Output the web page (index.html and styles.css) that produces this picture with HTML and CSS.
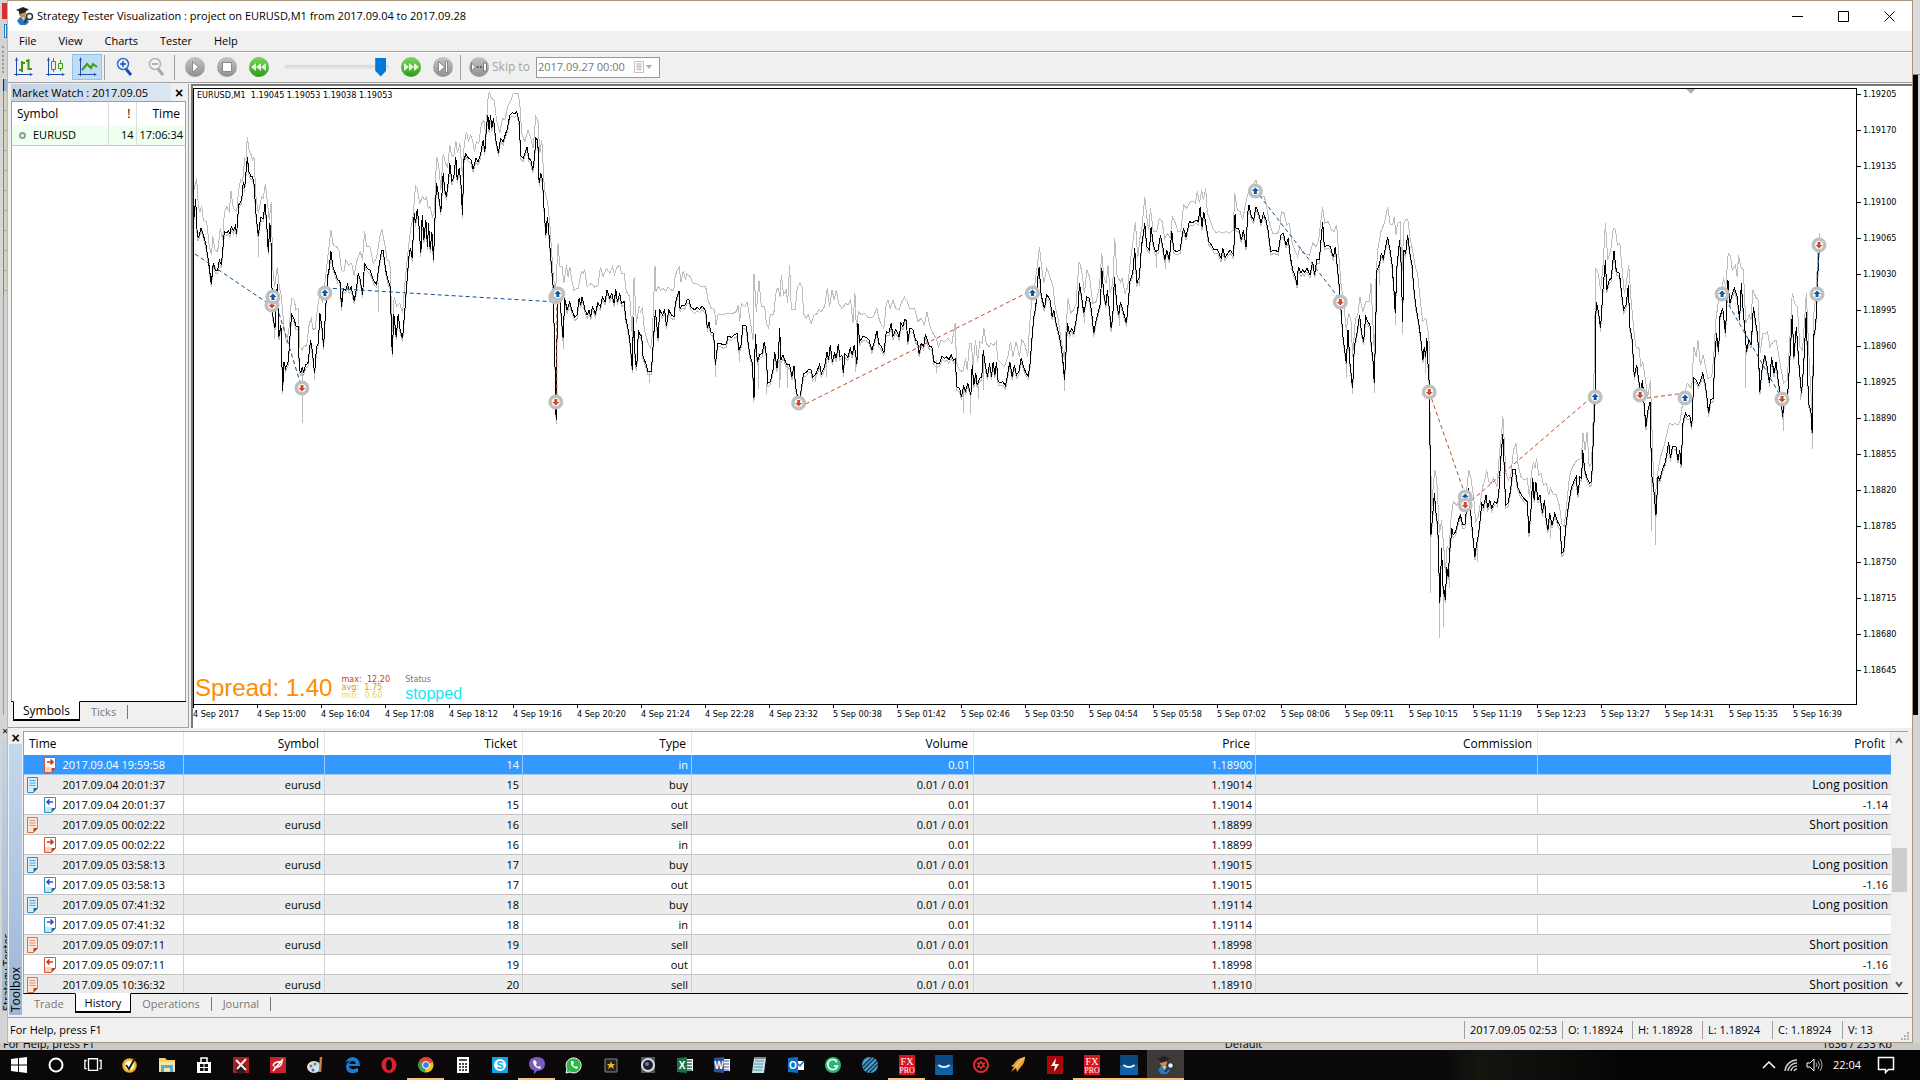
FILE: index.html
```html
<!DOCTYPE html>
<html lang="en">
<head>
<meta charset="utf-8">
<title>Strategy Tester Visualization</title>
<link rel="stylesheet" href="styles.css">
</head>
<body>
<svg class="defs" width="0" height="0" aria-hidden="true">
  <defs>
    <linearGradient id="grey" x2="0" y2="1"><stop stop-color="#c4c4c4"/><stop offset="1" stop-color="#8f8f8f"/></linearGradient>
    <linearGradient id="green" x2="0" y2="1"><stop stop-color="#7fd45c"/><stop offset="1" stop-color="#2f9a1e"/></linearGradient>
    <symbol id="buy" viewBox="0 0 16 16"><circle cx="8" cy="8" r="5.700" fill="#fff" stroke="#bfbfbf" stroke-width="3.600"/><path d="M8 4.500l3.500 3.500H9.500v3h-3V8h-2z" fill="#0b5aa5"/></symbol>
    <symbol id="sell" viewBox="0 0 16 16"><circle cx="8" cy="8" r="5.700" fill="#fff" stroke="#bfbfbf" stroke-width="3.600"/><path d="M8 11.500l3.500-3.500H9.500V5h-3v3h-2z" fill="#d0472a"/></symbol>
    <symbol id="order-blue" viewBox="0 0 12 16"><path d="M1.5.5h10v11l-4 4h-6z" fill="#d9eefb" stroke="#2b8fc0"/><path d="M3.500 3.500h6M3.500 6h6M3.500 8.500h6" stroke="#58a6cf"/><path d="M11.500 11h-4v4.500z" fill="#1b6f9c"/></symbol>
    <symbol id="order-red" viewBox="0 0 12 16"><path d="M1.5.5h10v11l-4 4h-6z" fill="#fbe3d6" stroke="#d9744f"/><path d="M3.500 3.500h6M3.500 6h6M3.500 8.500h6" stroke="#e0957a"/><path d="M11.500 11h-4v4.500z" fill="#b8401c"/></symbol>
    <symbol id="in-red" viewBox="0 0 12 16"><path d="M.5.5h11v11l-4 4h-7z" fill="#fff" stroke="#d05a38"/><path d="M1 10h6v5H1z" fill="#f8d0c0"/><path d="M3 5h6M6.500 2.500L9 5 6.500 7.500" fill="none" stroke="#c0391b" stroke-width="1.500"/><path d="M11.500 11h-4v4.500z" fill="#b8401c"/></symbol>
    <symbol id="out-red" viewBox="0 0 12 16"><path d="M.5.5h11v11l-4 4h-7z" fill="#fff" stroke="#d05a38"/><path d="M1 10h6v5H1z" fill="#f8d0c0"/><path d="M3 5h6M5.500 2.500L3 5l2.500 2.500" fill="none" stroke="#c0391b" stroke-width="1.500"/><path d="M11.500 11h-4v4.500z" fill="#b8401c"/></symbol>
    <symbol id="in-blue" viewBox="0 0 12 16"><path d="M.5.5h11v11l-4 4h-7z" fill="#fff" stroke="#2b8fc0"/><path d="M1 10h6v5H1z" fill="#c5e4f6"/><path d="M3 5h6M6.500 2.500L9 5 6.500 7.500" fill="none" stroke="#2b50b0" stroke-width="1.500"/><path d="M11.500 11h-4v4.500z" fill="#1b6f9c"/></symbol>
    <symbol id="out-blue" viewBox="0 0 12 16"><path d="M.5.5h11v11l-4 4h-7z" fill="#fff" stroke="#2b8fc0"/><path d="M1 10h6v5H1z" fill="#c5e4f6"/><path d="M3 5h6M5.500 2.500L3 5l2.500 2.500" fill="none" stroke="#2b50b0" stroke-width="1.500"/><path d="M11.500 11h-4v4.500z" fill="#1b6f9c"/></symbol>
    <symbol id="student" viewBox="0 0 18 18"><path d="M4 10l5-1 4 6-3 3H4L1 14z" fill="#2577d0"/><circle cx="6.500" cy="6.500" r="3.500" fill="#c98a55"/><path d="M0 3l7-3 6 2.500L7 6z" fill="#222"/><path d="M3 4v3l7-2V3z" fill="#222"/><path d="M5 10l3 4 1-4z" fill="#f1d45c"/><circle cx="13.500" cy="9.500" r="3" fill="#eaf4ff" stroke="#333" stroke-width="1.500"/><path d="M11 12l-3 4" stroke="#333" stroke-width="2"/></symbol>
    <symbol id="fxpro" viewBox="0 0 16 20"><path fill="#dc1420" d="M0 0h16v20H0z"/><text x="8" y="10" class="logo-serif">FX</text><text x="8" y="18" class="logo-serif small">PRO</text></symbol>
    <symbol id="swoosh" viewBox="0 0 16 18"><path fill="#0b4a80" d="M0 0h16v18H0z"/><path fill="#0e62a3" d="M0 9h16v9H0z"/><path d="M3 9q5 4 10 0" fill="none" stroke="#e8f4ff" stroke-width="1.500"/></symbol>
  </defs>
</svg>

<div class="desktop">
  <aside class="behind-left" aria-hidden="true">
    <span class="bl-red"></span><span class="bl-blue"></span><span class="bl-grip"></span><span class="bl-panel"></span><span class="bl-rows"></span><span class="bl-plain"></span><span class="bl-close">×</span><span class="bl-blueband">Strategy Tester</span>
  </aside>

  <main class="window">
    <header class="titlebar">
      <svg class="app-icon" width="18" height="18"><use href="#student"/></svg>
      <h1>Strategy Tester Visualization : project on EURUSD,M1 from 2017.09.04 to 2017.09.28</h1>
      <button class="winbtn" aria-label="Minimize"><svg width="11" height="11"><path d="M0 5.500h11" stroke="#000"/></svg></button>
      <button class="winbtn" aria-label="Maximize"><svg width="11" height="11"><path d="M.5.5h10v10H.5z" fill="none" stroke="#000"/></svg></button>
      <button class="winbtn" aria-label="Close"><svg width="11" height="11"><path d="M.5.5l10 10M10.500.5l-10 10" stroke="#000"/></svg></button>
    </header>

    <nav class="menu"><button>File</button><button>View</button><button>Charts</button><button>Tester</button><button>Help</button></nav>

    <div class="toolbar">
      <button class="tool" aria-label="Bar chart"><svg width="22" height="22"><path d="M4.500 3v17M2 18.500h18" stroke="#1d4fb0"/><path d="M3 4.500L4.500 1 6 4.500zM18 17l3 1.500-3 1.500z" fill="#1d4fb0"/><path d="M10 5v11M7 14h3M10 7h3M16.500 3v11M14 5h3M17 13h3" stroke="#3c9a17" stroke-width="2"/></svg></button>
      <button class="tool" aria-label="Candlesticks"><svg width="22" height="22"><path d="M4.500 3v17M2 18.500h18" stroke="#1d4fb0"/><path d="M3 4.500L4.500 1 6 4.500zM18 17l3 1.500-3 1.500z" fill="#1d4fb0"/><path d="M9.500 2v3m0 9v2M7.500 5.500h4v8h-4zM16.500 4v3m0 6v2M14.500 7.500h4v5h-4z" fill="none" stroke="#3c9a17"/></svg></button>
      <button class="tool active" aria-label="Line chart"><svg width="22" height="22"><path d="M4.500 3v17M2 18.500h18" stroke="#1d4fb0"/><path d="M3 4.500L4.500 1 6 4.500zM18 17l3 1.500-3 1.500z" fill="#1d4fb0"/><path d="M6 14l5-6 4 4 2-4 4 3" fill="none" stroke="#3c9a17" stroke-width="2"/></svg></button>
      <span class="sep"></span>
      <button class="tool" aria-label="Zoom in"><svg width="22" height="22"><path d="M12 13l5 6" stroke="#1d4fb0" stroke-width="3"/><circle cx="9" cy="8" r="5.500" fill="#e6f2fd" stroke="#2f6fc4" stroke-width="1.500"/><path d="M6 8h6M9 5v6" stroke="#1d4fb0" stroke-width="1.500"/></svg></button>
      <button class="tool" aria-label="Zoom out"><svg width="22" height="22"><path d="M12 13l5 6" stroke="#a8a8a8" stroke-width="3"/><circle cx="9" cy="8" r="5.500" fill="#f4f4f4" stroke="#b0b0b0" stroke-width="1.500"/><path d="M6 8h6" stroke="#999" stroke-width="1.500"/></svg></button>
      <span class="sep"></span>
      <button class="tool" aria-label="Play"><svg width="22" height="22"><circle cx="11" cy="11" r="10" fill="url(#grey)"/><path d="M8.500 5.500l6 5.500-6 5.500z" fill="#fff" stroke="#888"/></svg></button>
      <button class="tool" aria-label="Stop"><svg width="22" height="22"><circle cx="11" cy="11" r="10" fill="url(#grey)"/><path d="M6.500 6.500h9v9h-9z" fill="#fff" stroke="#888"/></svg></button>
      <button class="tool" aria-label="Slower"><svg width="22" height="22"><circle cx="11" cy="11" r="10" fill="url(#green)"/><path d="M8 7v8l-5-4zM13 7v8l-5-4zM18 7v8l-5-4z" fill="#e4f7da"/></svg></button>
      <input class="speed" type="range" min="0" max="100" value="97" aria-label="Speed">
      <button class="tool" aria-label="Faster"><svg width="22" height="22"><circle cx="11" cy="11" r="10" fill="url(#green)"/><path d="M4 7v8l5-4zM9 7v8l5-4zM14 7v8l5-4z" fill="#e4f7da"/></svg></button>
      <button class="tool" aria-label="Step"><svg width="22" height="22"><circle cx="11" cy="11" r="10" fill="url(#grey)"/><path d="M6.500 5.500l6 5.500-6 5.500zM13.500 5.500h2v11h-2z" fill="#fff" stroke="#888"/></svg></button>
      <span class="sep"></span>
      <button class="skip"><svg width="22" height="22"><circle cx="11" cy="11" r="10" fill="url(#grey)"/><path d="M3.500 7l4 4-4 4zM15.500 7h3v8h-3z" fill="#fff" stroke="#777"/><path d="M9 11h1.500M12 11h1.500" stroke="#555" stroke-width="2"/></svg>Skip to</button>
      <div class="datebox"><input type="text" value="2017.09.27 00:00" aria-label="Skip to date" disabled><svg width="26" height="14"><path d="M1.500 1.500h9v11h-9zM3 4h6M3 6.500h6M3 9h6M5 3v8M7 3v8" fill="none" stroke="#c2c2c2"/><path d="M13 5h6l-3 4z" fill="#aaa"/></svg></div>
    </div>

    <div class="workspace">
      <section class="watch">
        <header><h2>Market Watch : 2017.09.05</h2><button aria-label="Close Market Watch">×</button></header>
        <div class="watch-body">
          <table>
            <colgroup><col class="w-sym"><col class="w-spread"><col></colgroup>
            <thead><tr><th>Symbol</th><th>!</th><th>Time</th></tr></thead>
            <tbody><tr><td><i class="dot"></i>EURUSD</td><td>14</td><td>17:06:34</td></tr></tbody>
          </table>
        </div>
        <nav class="tabs watch-tabs"><button class="on">Symbols</button><button>Ticks</button></nav>
      </section>

      <section class="chart">
        <div class="plot">
          <svg class="lines" viewBox="194 89 1663 615" preserveAspectRatio="none">
            <path d="M1687 89h9l-4 5z" fill="#b0b0b0"/>
            <g class="range" transform="translate(180 80) scale(.33333)">
              <polyline points="42,330 50,295 55,380 60,395 65,378 70,420 80,425 88,500 95,525 98,468 105,510 113,515 121,445 128,480 133,400 140,380 148,395 153,333 160,385 170,395 176,330 182,300 188,305 194,235 198,240 202,172 208,215 214,225 218,240 222,232 228,350 235,400 245,350 250,355 256,312 262,365 268,420 274,365 278,560 284,620 292,560 298,620 303,640 312,740 320,790 328,740 335,655 343,660 348,690 355,685 360,800 367,810 373,795 380,800 388,730 394,715 400,750 406,745 412,690 420,640 428,670 436,600 445,520 453,450 460,495 470,500 478,515 485,570 492,575 498,540 506,555 515,550 523,588 530,545 541,515 548,540 554,452 560,500 570,500 580,550 590,535 600,470 606,447 614,490 622,540 630,545 637,755 643,650 650,680 660,670 668,700 676,600 684,520 692,450 700,405 707,318 712,325 720,370 728,350 735,360 740,350 745,385 750,380 758,410 764,395 770,230 776,250 783,330 790,222 797,250 803,265 810,195 815,225 822,230 828,183 833,220 840,190 848,290 853,195 860,155 866,185 872,165 878,180 884,215 890,185 897,190 905,130 912,120 918,165 924,60 928,35 935,55 943,60 950,120 960,160 968,115 975,120 985,75 992,65 1000,42 1015,42 1020,70 1026,160 1035,185 1045,150 1053,175 1060,205 1068,110 1075,125 1080,220 1086,180 1094,330 1104,370 1110,430 1120,580 1127,640 1135,490 1140,560 1147,560 1152,610 1160,555 1165,590 1170,560 1175,595 1182,630 1195,625 1205,575 1210,580 1215,570 1222,620 1235,610 1245,622 1255,615 1262,560 1270,590 1280,565 1290,580 1298,560 1304,585 1312,562 1320,555 1325,580 1333,580 1340,635 1350,650 1358,770 1363,590 1370,730 1378,680 1380,682"/>
              <path d="M367 870V1030M235 470V532M404 870V900M595 610V695M1131 1000V1033M283 740V778M1150 770V808"/>
              <use href="#close-a" y="10"/>
            </g>
            <g class="range" transform="translate(640 200) scale(.33333)">
              <polyline points="0,340 8,325 14,390 25,430 33,445 38,400 46,198 49,275 56,260 63,270 70,265 78,275 85,262 95,270 102,272 107,225 118,200 124,245 131,212 137,240 141,222 152,230 160,250 172,252 185,260 198,260 205,300 215,325 225,330 229,375 235,345 250,345 262,340 275,342 290,335 296,315 300,365 305,310 315,320 322,305 330,350 340,420 343,222 350,335 358,242 365,320 375,320 380,370 387,385 392,345 402,345 410,270 416,265 421,290 425,225 432,285 440,270 444,310 450,195 455,328 467,328 473,260 482,250 489,265 491,340 500,355 506,345 515,370 523,345 530,345 537,330 545,335 555,320 563,265 570,320 577,270 584,300 590,270 597,310 607,325 618,310 625,315 633,300 640,370 646,280 650,380 657,335 665,345 675,340 685,352 700,352 712,325 718,355 725,375 733,385 740,310 745,300 752,325 760,300 768,325 778,330 787,305 795,292 803,305 810,325 825,325 835,365 845,355 855,375 862,335 870,375 880,400 890,415 897,440 905,420 915,425 925,415 937,430 947,370 951,490 960,510 970,515 978,475 983,510 990,430 996,430 1000,500 1008,420 1014,485 1021,425 1028,430 1033,385 1040,430 1048,440 1055,430 1062,435 1070,425 1075,480 1085,490 1095,500 1105,470 1113,425 1120,470 1130,425 1140,470 1147,420 1155,430 1165,470 1170,380 1177,300 1185,260 1193,200 1200,140 1205,190 1213,250 1222,205 1228,220 1240,255 1247,320 1255,350 1265,420 1275,480 1282,350 1286,295 1293,340 1302,330 1310,310 1318,190 1320,188"/>
              <path d="M28 515V548M227 490V532M298 440V485M358 460V568M382 550V582M420 480V565M443 490V565M424 480V540M611 510V520M647 460V515M892 480V518M973 575V638M994 585V641M1018 540V597M1033 460V570M1275 520V572M528 520V545M562 460V530"/>
              <use href="#close-b" y="10"/>
            </g>
            <g class="range" transform="translate(1080 170) scale(.33333)">
              <polyline points="0,275 8,310 15,370 22,300 30,320 40,400 50,395 60,350 67,250 73,320 80,340 86,285 92,370 100,340 106,205 113,320 123,335 128,325 137,370 145,350 153,270 160,220 168,155 175,265 182,200 188,170 196,80 203,150 208,180 213,115 222,185 232,185 240,145 248,155 256,205 265,190 272,205 279,140 288,160 296,185 304,185 313,105 322,115 332,95 342,95 348,100 354,62 360,100 367,60 372,90 379,55 384,130 392,150 400,175 410,188 420,185 430,190 440,185 450,190 462,180 466,70 474,120 482,125 490,150 497,110 503,80 511,60 530,30 540,80 555,80 562,110 570,160 580,190 595,190 601,175 606,125 614,130 622,165 630,160 638,215 648,245 655,260 662,230 672,250 690,255 700,220 710,230 718,210 725,150 730,110 736,160 747,155 756,180 764,185 772,165 778,250 785,340 793,400 801,480 808,430 815,450 820,560 828,450 836,430 842,380 850,425 860,395 870,395 875,340 880,440 886,560 890,330 895,240 905,185 915,160 925,110 933,165 940,165 945,140 950,195 955,160 963,155 968,310 974,160 980,148 986,150 993,210 1000,240 1008,290 1015,310 1022,380 1030,455 1040,445 1046,480 1050,520 1052,640"/>
              <path d="M230 245V293M257 270V297M801 580V625M819 650V673M886 640V670M948 430V465M969 455V493M1039 560V612M16 420V460M121 430V468M180 330V348M900 285V345"/>
              <use href="#close-c" y="10"/>
            </g>
            <g class="range" transform="translate(1380 180) scale(.34433 .33333)">
              <polyline points="146,600 152,1000 156,930 161,870 167,900 175,1060 181,1020 188,1110 192,1180 197,1100 203,1110 208,1020 215,965 225,975 235,960 245,970 253,940 260,870 267,900 275,960 280,1025 288,1010 295,960 300,920 306,905 312,870 318,905 325,910 332,895 342,920 350,810 355,770 359,707 363,780 368,880 375,900 382,890 390,810 397,790 404,860 412,890 420,900 430,895 436,950 442,880 448,850 453,865 457,835 463,885 470,880 477,915 485,910 492,945 498,925 506,945 515,945 524,980 530,1030 537,1040 544,980 552,895 558,870 565,855 575,840 587,835 592,760 598,810 604,757 610,860 617,850 622,700 627,400 629,265 636,280 643,330 650,260 657,130 664,240 672,215 680,145 686,148 692,195 699,190 706,270 712,340 718,310 725,255 731,350 738,430 745,500 755,505 760,560 766,545 772,590 780,650 788,600 794,800 800,990 806,900 812,860 820,820 828,795 836,760 843,730 852,735 860,730 868,735 875,720 880,680 887,640 895,610 903,620 908,625 914,500 921,530 926,480 933,555 941,525 948,560 955,595 966,590 972,530 978,420 986,360 994,340 1000,295 1007,320 1014,220 1020,225 1026,270 1035,255 1040,290 1044,225 1050,260 1058,270 1065,430 1075,405 1080,420 1086,330 1093,350 1101,360 1107,520 1114,460 1122,460 1128,455 1135,500 1145,485 1153,480 1160,520 1168,570 1175,610 1185,600 1192,500 1200,340 1207,370 1215,380 1222,500 1230,510 1241,340 1250,560 1258,700 1263,400 1270,330 1275,200 1280,160"/>
              <path d="M150 1060V1240M175 1260V1375M187 1240V1340M203 1170V1225M285 1080V1147M435 1060V1072M498 1000V1075M791 880V1052M802 1000V1095M1065 510V625M1174 700V752M1258 750V806M1225 640V660"/>
              <use href="#close-d" y="10"/>
            </g>
            <g class="close" transform="translate(180 80) scale(.33333)"><polyline id="close-a" points="42,410 47,358 52,470 56,472 63,443 70,465 78,495 85,540 94,612 100,548 106,570 113,572 118,540 124,555 130,490 133,455 140,458 146,452 150,462 154,440 160,452 166,438 170,462 176,375 185,360 190,305 194,325 202,232 207,275 213,290 218,290 222,310 228,400 235,468 242,412 250,415 255,372 260,425 265,515 270,430 275,520 277,700 285,745 292,612 297,770 303,735 308,932 312,845 317,865 325,845 330,770 335,703 342,715 348,738 355,740 358,868 363,878 367,862 371,878 377,855 384,850 392,780 398,820 404,880 410,800 415,790 420,700 426,740 431,800 437,690 443,590 448,565 453,513 459,560 468,585 474,600 480,603 485,682 490,625 497,630 503,612 508,630 514,622 523,662 530,625 535,580 541,598 548,645 554,548 562,565 570,570 577,590 583,605 590,612 597,560 605,512 610,512 617,568 624,600 631,620 637,822 642,703 649,770 655,703 661,750 668,775 675,690 680,620 688,520 692,503 697,535 703,400 707,430 712,388 717,430 723,520 727,405 732,480 738,420 743,500 746,430 751,508 756,455 761,540 766,400 770,310 776,345 783,395 790,280 795,330 800,350 806,300 810,250 816,305 822,290 828,232 832,300 838,265 843,305 848,405 852,240 858,222 866,235 873,238 880,268 888,235 895,245 902,225 910,180 915,215 920,140 924,105 928,150 932,105 936,145 941,115 948,180 956,220 962,175 970,185 976,165 983,145 990,105 997,98 1005,102 1011,95 1018,125 1023,228 1030,235 1036,218 1042,200 1047,235 1053,240 1059,270 1064,235 1068,175 1074,180 1078,310 1083,280 1088,300 1093,390 1098,465 1103,410 1108,470 1115,560 1120,620 1124,780 1129,1020 1133,660 1140,640 1145,720 1150,775 1155,655 1162,690 1170,665 1176,690 1185,712 1192,705 1198,655 1203,675 1207,650 1216,690 1222,705 1228,690 1233,710 1238,680 1247,700 1254,670 1262,680 1268,650 1276,665 1282,630 1290,655 1296,640 1303,670 1308,628 1313,665 1320,640 1325,670 1333,665 1338,715 1344,740 1350,780 1358,870 1361,710 1367,850 1371,862 1376,750 1380,765"/></g>
            <g class="close" transform="translate(640 200) scale(.33333)"><polyline id="close-b" points="0,400 6,410 10,470 18,490 25,515 35,515 40,440 47,330 55,415 60,330 68,345 75,330 80,378 87,330 95,345 103,350 107,310 112,290 118,272 121,325 128,315 135,318 142,300 148,300 153,320 165,330 172,322 180,328 187,318 198,332 203,385 208,365 213,395 222,400 227,495 234,430 242,430 250,435 260,432 265,408 275,412 283,405 292,400 298,450 304,435 310,375 320,378 326,435 332,470 338,490 343,595 347,402 353,485 360,465 368,460 374,425 380,465 384,550 392,545 400,510 405,455 412,505 416,470 420,385 424,480 430,465 440,492 450,495 457,530 463,497 468,560 473,585 480,600 486,560 492,520 500,518 506,508 514,508 519,532 530,520 540,492 545,522 555,500 562,455 567,480 572,435 578,485 585,460 590,475 596,432 601,470 607,465 611,520 616,462 625,472 632,445 638,465 644,435 648,460 652,492 655,370 660,425 670,410 680,412 688,420 697,450 703,430 712,392 718,430 725,440 733,458 740,395 748,398 755,370 760,410 768,390 775,400 779,412 784,370 790,380 795,358 800,362 805,425 811,385 820,388 828,420 834,425 839,462 845,430 852,440 858,402 863,420 870,440 877,440 883,485 893,492 900,490 908,468 915,475 922,470 928,480 935,465 942,480 948,475 951,560 960,565 966,590 972,558 978,572 985,550 994,585 998,495 1003,555 1009,520 1013,555 1020,535 1027,530 1031,450 1038,500 1044,530 1050,490 1056,530 1061,485 1066,525 1071,485 1076,545 1085,548 1090,545 1098,558 1105,520 1111,485 1118,530 1125,495 1131,525 1138,515 1145,475 1152,500 1160,520 1166,528 1172,490 1177,420 1183,350 1189,320 1194,240 1199,202 1205,285 1215,325 1221,285 1227,290 1232,300 1238,350 1243,330 1250,370 1260,410 1266,445 1272,500 1275,540 1280,450 1284,370 1290,400 1297,385 1303,400 1310,360 1316,320 1320,250"/></g>
            <g class="close" transform="translate(1080 170) scale(.33333)"><polyline id="close-c" points="0,340 5,370 13,430 22,380 30,385 37,430 43,490 50,450 58,420 63,400 67,295 73,370 79,405 84,360 90,420 95,475 100,440 105,322 112,400 118,435 123,395 130,420 141,460 147,390 152,330 160,310 166,235 172,340 180,320 186,230 196,160 202,230 210,240 215,170 222,225 228,245 236,240 243,195 250,230 256,270 262,240 270,270 277,182 283,240 292,245 302,240 312,175 320,200 330,155 340,158 350,150 357,155 362,112 368,170 373,125 380,165 388,215 396,225 405,240 415,240 425,265 430,235 437,262 445,250 452,240 463,255 467,132 470,175 478,175 486,210 492,180 500,230 505,130 509,105 516,140 523,150 530,110 538,130 545,158 552,130 560,150 566,180 574,245 583,240 597,245 604,195 612,190 620,225 627,205 633,260 640,300 648,320 653,345 657,290 665,310 670,300 675,308 683,295 692,315 700,275 706,315 712,270 720,270 725,210 730,155 735,230 745,225 753,230 762,262 768,230 774,290 779,340 785,420 791,500 801,580 806,480 812,580 820,655 825,530 833,490 841,435 847,490 853,515 859,440 866,455 872,465 876,530 881,570 885,640 889,480 893,300 900,285 906,250 912,265 918,235 925,200 932,240 938,280 944,360 948,430 953,290 961,210 966,290 970,455 974,240 979,250 985,195 992,250 999,290 1003,350 1010,410 1017,450 1024,500 1031,570 1035,530 1039,560 1043,505 1047,600 1052,665"/></g>
            <g class="close" transform="translate(1380 180) scale(.34433 .33333)"><polyline id="close-d" points="146,634 148,860 150,1065 155,1010 160,940 165,1000 170,1040 172,1120 176,1268 181,1105 186,1240 189,1235 192,1260 196,1160 200,1190 205,1110 211,1045 215,1065 222,1055 230,1020 236,1005 242,1035 249,1035 254,980 260,925 265,990 271,1060 278,1130 282,1095 288,1065 293,1020 298,970 303,980 310,945 315,985 321,960 327,985 335,965 342,970 347,945 352,850 359,762 363,860 367,975 374,970 381,935 388,870 395,870 402,920 410,940 420,955 430,965 435,1060 441,985 446,895 450,960 455,905 461,960 467,945 474,1000 480,960 485,1020 490,1050 495,1000 502,1035 510,1000 518,1025 526,1040 530,1120 536,1115 542,1040 548,990 553,955 558,925 565,905 572,890 577,945 583,890 588,895 591,810 597,870 604,895 612,910 617,905 621,800 625,700 628,650 630,365 637,395 643,445 650,330 657,240 661,330 668,300 674,295 682,212 689,275 698,280 703,330 710,390 717,375 724,315 728,440 735,480 741,590 748,555 754,600 759,640 765,600 770,680 775,740 781,690 787,665 791,880 797,920 804,1005 810,890 815,900 822,870 830,850 836,820 841,785 846,835 852,800 862,800 868,840 873,810 877,855 883,720 890,700 895,710 902,705 908,740 914,595 921,600 928,615 934,600 940,580 947,610 952,650 957,700 963,660 970,655 975,540 980,460 986,515 990,410 998,385 1006,460 1013,300 1019,370 1025,345 1032,325 1040,350 1047,420 1052,310 1058,400 1062,440 1067,515 1074,480 1081,495 1087,380 1094,430 1100,470 1106,635 1112,570 1120,525 1127,560 1134,610 1140,530 1147,580 1153,545 1160,610 1167,650 1172,710 1178,660 1187,640 1193,540 1200,405 1205,530 1212,440 1220,560 1227,640 1233,560 1241,395 1247,670 1254,690 1258,760 1262,470 1268,440 1273,340 1275,270 1279,200"/></g>
            <path class="deal blue" d="M195 254L272 306M275 300L301 385M326 288L557 302M1256 190L1341 300M1723 293L1782 397M1818 292L1820 248"/>
            <path class="deal red" d="M557 300V398M800 407L1033 290M1430 392L1466 495M1467 505L1595 395M1641 399L1686 393"/>
            <use href="#sell" x="264" y="297" width="16" height="16"/><use href="#buy" x="265" y="289" width="16" height="16"/>
            <use href="#sell" x="294" y="380" width="16" height="16"/><use href="#buy" x="317" y="285" width="16" height="16"/>
            <use href="#buy" x="548" y="289" width="16" height="16"/><use href="#buy" x="550" y="286" width="16" height="16"/>
            <use href="#sell" x="548" y="394" width="16" height="16"/><use href="#sell" x="791" y="395" width="16" height="16"/>
            <use href="#buy" x="1025" y="285" width="16" height="16"/><use href="#buy" x="1248" y="183" width="16" height="16"/>
            <use href="#sell" x="1333" y="294" width="16" height="16"/><use href="#sell" x="1422" y="384" width="16" height="16"/>
            <use href="#buy" x="1458" y="489" width="16" height="16"/><use href="#sell" x="1458" y="497" width="16" height="16"/>
            <use href="#buy" x="1588" y="389" width="16" height="16"/><use href="#sell" x="1633" y="387" width="16" height="16"/>
            <use href="#buy" x="1678" y="390" width="16" height="16"/><use href="#buy" x="1715" y="286" width="16" height="16"/>
            <use href="#sell" x="1775" y="391" width="16" height="16"/><use href="#buy" x="1810" y="286" width="16" height="16"/>
            <use href="#sell" x="1812" y="237" width="16" height="16"/>
          </svg>
          <div class="overlay">
            <p class="quote">EURUSD,M1&nbsp; 1.19045 1.19053 1.19038 1.19053</p>
            <div class="spread">
              <strong>Spread: 1.40</strong>
              <div class="stats"><span class="max">max:&nbsp; 12.20</span><span class="avg">avg:&nbsp; 1.75</span><span class="min">min:&nbsp; 0.60</span></div>
              <div class="status"><span>Status</span><b>stopped</b></div>
            </div>
          </div>
        </div>
        <div class="prices"><span>1.19205</span><span>1.19170</span><span>1.19135</span><span>1.19100</span><span>1.19065</span><span>1.19030</span><span>1.18995</span><span>1.18960</span><span>1.18925</span><span>1.18890</span><span>1.18855</span><span>1.18820</span><span>1.18785</span><span>1.18750</span><span>1.18715</span><span>1.18680</span><span>1.18645</span></div>
        <div class="times"><span>4 Sep 2017</span><span>4 Sep 15:00</span><span>4 Sep 16:04</span><span>4 Sep 17:08</span><span>4 Sep 18:12</span><span>4 Sep 19:16</span><span>4 Sep 20:20</span><span>4 Sep 21:24</span><span>4 Sep 22:28</span><span>4 Sep 23:32</span><span>5 Sep 00:38</span><span>5 Sep 01:42</span><span>5 Sep 02:46</span><span>5 Sep 03:50</span><span>5 Sep 04:54</span><span>5 Sep 05:58</span><span>5 Sep 07:02</span><span>5 Sep 08:06</span><span>5 Sep 09:11</span><span>5 Sep 10:15</span><span>5 Sep 11:19</span><span>5 Sep 12:23</span><span>5 Sep 13:27</span><span>5 Sep 14:31</span><span>5 Sep 15:35</span><span>5 Sep 16:39</span></div>
      </section>
    </div>

    <section class="toolbox">
      <div class="side"><button aria-label="Close Toolbox">×</button><span>Toolbox</span></div>
      <div class="toolbox-main">
        <div class="history">
          <table>
            <colgroup><col class="c1"><col class="c2"><col class="c3"><col class="c4"><col class="c5"><col class="c5"><col class="c5"><col></colgroup>
            <thead><tr><th>Time</th><th>Symbol</th><th>Ticket</th><th>Type</th><th>Volume</th><th>Price</th><th>Commission</th><th>Profit</th></tr></thead>
            <tbody>
              <tr class="sel"><td><svg class="deal-ico"><use href="#in-red"/></svg>2017.09.04 19:59:58</td><td></td><td>14</td><td>in</td><td>0.01</td><td>1.18900</td><td></td><td></td></tr>
              <tr class="order"><td><svg class="order-ico"><use href="#order-blue"/></svg>2017.09.04 20:01:37</td><td>eurusd</td><td>15</td><td>buy</td><td>0.01 / 0.01</td><td>1.19014</td><td colspan="2">Long position</td></tr>
              <tr><td><svg class="deal-ico"><use href="#out-blue"/></svg>2017.09.04 20:01:37</td><td></td><td>15</td><td>out</td><td>0.01</td><td>1.19014</td><td></td><td>-1.14</td></tr>
              <tr class="order"><td><svg class="order-ico"><use href="#order-red"/></svg>2017.09.05 00:02:22</td><td>eurusd</td><td>16</td><td>sell</td><td>0.01 / 0.01</td><td>1.18899</td><td colspan="2">Short position</td></tr>
              <tr><td><svg class="deal-ico"><use href="#in-red"/></svg>2017.09.05 00:02:22</td><td></td><td>16</td><td>in</td><td>0.01</td><td>1.18899</td><td></td><td></td></tr>
              <tr class="order"><td><svg class="order-ico"><use href="#order-blue"/></svg>2017.09.05 03:58:13</td><td>eurusd</td><td>17</td><td>buy</td><td>0.01 / 0.01</td><td>1.19015</td><td colspan="2">Long position</td></tr>
              <tr><td><svg class="deal-ico"><use href="#out-blue"/></svg>2017.09.05 03:58:13</td><td></td><td>17</td><td>out</td><td>0.01</td><td>1.19015</td><td></td><td>-1.16</td></tr>
              <tr class="order"><td><svg class="order-ico"><use href="#order-blue"/></svg>2017.09.05 07:41:32</td><td>eurusd</td><td>18</td><td>buy</td><td>0.01 / 0.01</td><td>1.19114</td><td colspan="2">Long position</td></tr>
              <tr><td><svg class="deal-ico"><use href="#in-blue"/></svg>2017.09.05 07:41:32</td><td></td><td>18</td><td>in</td><td>0.01</td><td>1.19114</td><td></td><td></td></tr>
              <tr class="order"><td><svg class="order-ico"><use href="#order-red"/></svg>2017.09.05 09:07:11</td><td>eurusd</td><td>19</td><td>sell</td><td>0.01 / 0.01</td><td>1.18998</td><td colspan="2">Short position</td></tr>
              <tr><td><svg class="deal-ico"><use href="#out-red"/></svg>2017.09.05 09:07:11</td><td></td><td>19</td><td>out</td><td>0.01</td><td>1.18998</td><td></td><td>-1.16</td></tr>
              <tr class="order"><td><svg class="order-ico"><use href="#order-red"/></svg>2017.09.05 10:36:32</td><td>eurusd</td><td>20</td><td>sell</td><td>0.01 / 0.01</td><td>1.18910</td><td colspan="2">Short position</td></tr>
            </tbody>
          </table>
          <div class="scroll"><svg width="16" height="18"><path d="M5 11l3-4 3 4" fill="none" stroke="#555" stroke-width="2"/></svg><i></i><svg width="16" height="18"><path d="M5 7l3 4 3-4" fill="none" stroke="#555" stroke-width="2"/></svg></div>
        </div>
        <nav class="tabs box-tabs"><button>Trade</button><button class="on">History</button><button>Operations</button><button>Journal</button></nav>
      </div>
    </section>

    <footer class="statusbar"><span class="help">For Help, press F1</span><span class="s-date">2017.09.05 02:53</span><span class="s-ohlc">O: 1.18924</span><span class="s-ohlc">H: 1.18928</span><span class="s-ohlc">L: 1.18924</span><span class="s-ohlc">C: 1.18924</span><span class="s-vol">V: 13</span><svg width="10" height="10"><path d="M7 1h2M4 4h2M7 4h2M1 7h2M4 7h2M7 7h2" stroke="#b0b0b0" stroke-width="2"/></svg></footer>
  </main>
  <aside class="behind-right" aria-hidden="true"><span class="br-top"></span><span class="br-black"></span><span class="br-low"></span></aside>
  <div class="behind-bottom" aria-hidden="true"><span>For Help, press F1</span><span class="bb-def">Default</span><span class="bb-net">1636 / 233 Kb</span></div>
</div>

<nav class="taskbar">
  <button aria-label="Start"><svg viewBox="0 0 18 18"><path d="M1 3l7-1v6.500H1zM9 2l8-1v7.500H9zM1 9.500h7V16l-7-1zM9 9.500h8V17l-8-1z" fill="#fff"/></svg></button>
  <button aria-label="Cortana"><svg viewBox="0 0 18 18"><circle cx="9" cy="9" r="6.500" fill="none" stroke="#fff" stroke-width="2"/></svg></button>
  <button aria-label="Task view"><svg viewBox="0 0 20 18"><path d="M5 2h10v13H5zM3 4H1v9h2M17 4h2v9h-2" fill="none" stroke="#fff" stroke-width="1.500"/></svg></button>
  <button aria-label="Norton"><svg viewBox="0 0 18 18"><circle cx="8.500" cy="9.500" r="6" fill="#fff" stroke="#f2b31d" stroke-width="2.500"/><path d="M5 9l3 4 6-11" fill="none" stroke="#222" stroke-width="2"/></svg></button>
  <button aria-label="Explorer"><svg viewBox="0 0 18 18"><path d="M1 2h6l2 2h8v12H1z" fill="#f4d36c"/><path d="M1 6h16v9H1z" fill="#fbe69a"/><path d="M3 16V9h12v7h-3v-4H6v4z" fill="#4eaede"/></svg></button>
  <button aria-label="Store"><svg viewBox="0 0 18 18"><path d="M2 6h14v11H2z" fill="#fff"/><path d="M6 6V2h6v4" fill="none" stroke="#fff" stroke-width="1.500"/><path d="M5 8h3.500v3H5zM9.500 8H13v3H9.500zM5 12h3.500v3H5zM9.500 12H13v3H9.500z" fill="#111"/></svg></button>
  <button aria-label="Tools"><svg viewBox="0 0 18 18"><path d="M1 1h16v16H1z" fill="#a51e1c"/><circle cx="9" cy="13" r="5" fill="#2d1b1b"/><path d="M4 4l10 10M14 3L5 13" stroke="#eee" stroke-width="2"/></svg></button>
  <button aria-label="Phone"><svg viewBox="0 0 18 18"><path d="M1 1h16v16H1z" fill="#c8202c"/><path d="M4 10q1-5 9-4-1 6-8 5M14 3L4 15" fill="none" stroke="#fff" stroke-width="1.500"/></svg></button>
  <button aria-label="Paint"><svg viewBox="0 0 18 18"><ellipse cx="8" cy="11" rx="7" ry="6" fill="#cfe4ef"/><circle cx="5" cy="10" r="1.500" fill="#e34b3e"/><circle cx="9" cy="8" r="1.500" fill="#4aa83c"/><circle cx="7" cy="14" r="1.500" fill="#2e74c9"/><path d="M15 1l-1 15" stroke="#c9803a" stroke-width="2.500"/></svg></button>
  <button aria-label="Edge"><svg viewBox="0 0 18 18"><path d="M2 8Q4 1 10 1q7 1 7 9H6q1 5 9 2v4q-11 4-12-5 0-4 4-6-4 0-5 3zM6.500 8h6q0-3-3-3t-3 3z" fill="#1b7cd6"/></svg></button>
  <button aria-label="Opera"><svg viewBox="0 0 18 18"><path fill-rule="evenodd" d="M9 1a7.500 8 0 100 16A7.500 8 0 009 1zm0 2.500c2 0 3 2.500 3 5.500s-1 5.500-3 5.500S6 12 6 9s1-5.500 3-5.500z" fill="#e0202c"/></svg></button>
  <button class="run" aria-label="Chrome"><svg viewBox="0 0 18 18"><circle cx="9" cy="9" r="7.500" fill="#f5c518"/><path d="M9 9L2 5.500A7.500 7.500 0 0116 6z" fill="#e04434"/><path d="M9 9l-1 7.500A7.500 7.500 0 012 5.500z" fill="#36a452"/><circle cx="9" cy="9" r="3.500" fill="#3f7fe8" stroke="#fff"/></svg></button>
  <button aria-label="Calculator"><svg viewBox="0 0 18 18"><path d="M3 1h12v16H3z" fill="#fff"/><path d="M5 4h8M5 8h2M8 8h2M11 8h2M5 11h2M8 11h2M11 11h2M5 14h2M8 14h2M11 14h2" stroke="#111" stroke-width="1.500"/></svg></button>
  <button aria-label="Skype"><svg viewBox="0 0 18 18"><path d="M1 1h16v16H1z" fill="#12a5ea"/><circle cx="9" cy="9" r="6" fill="#fff"/><text x="9" y="13" class="logo" fill="#12a5ea">S</text></svg></button>
  <button class="run" aria-label="Viber"><svg viewBox="0 0 18 18"><path d="M9 1q8 0 8 7t-8 7l-3 3v-3.500Q1 13 1 8q0-7 8-7z" fill="#7d5bbe"/><path d="M5 5q0 6 7 8l1-2-2-1-1 1q-2-1-2-3l1-1-2-3z" fill="#fff"/></svg></button>
  <button aria-label="WhatsApp"><svg viewBox="0 0 18 18"><path d="M1 17l1-4a7.500 7.500 0 113 3z" fill="#2fb843" stroke="#fff"/><path d="M6 5q-1 6 6 8l1-2-2-1-1 1q-2-1-2-3l1-1-1-2z" fill="#fff"/></svg></button>
  <button aria-label="Video"><svg viewBox="0 0 18 18"><path d="M3 3h12v13H3z" fill="#222" stroke="#888"/><path d="M9 5l1 3h3l-2 2 1 3-3-2-3 2 1-3-2-2h3z" fill="#f3b71d"/></svg></button>
  <button aria-label="Camera"><svg viewBox="0 0 18 18"><path d="M2 1h14v16H2z" fill="#555"/><circle cx="9" cy="9" r="7" fill="#ddd"/><circle cx="9" cy="9" r="5" fill="#1c2030"/><circle cx="8" cy="8" r="2" fill="#6a7ab5"/></svg></button>
  <button aria-label="Excel"><svg viewBox="0 0 18 18"><path d="M9 3h8v12H9z" fill="#fff"/><path d="M11 5h5M11 8h5M11 11h5M11 14h5" stroke="#1f7145" stroke-width="1.500"/><path d="M1 2l10-1v16L1 16z" fill="#1f7145"/><text x="6" y="13" class="logo">X</text></svg></button>
  <button aria-label="Word"><svg viewBox="0 0 18 18"><path d="M9 3h8v12H9z" fill="#fff"/><path d="M11 5h5M11 8h5M11 11h5M11 14h5" stroke="#2a5699" stroke-width="1"/><path d="M1 2l10-1v16L1 16z" fill="#2a5699"/><text x="6" y="13" class="logo">W</text></svg></button>
  <button aria-label="Notepad"><svg viewBox="0 0 18 18"><path d="M4 2h12l-2 15H2z" fill="#bfe3ea"/><path d="M5 5h9M4 8h9M4 11h9M3 14h9" stroke="#5b93a3"/><path d="M4 2h12" stroke="#888" stroke-width="2"/></svg></button>
  <button aria-label="Outlook"><svg viewBox="0 0 18 18"><path d="M9 5h8v9H9z" fill="#fff"/><path d="M10 7l3 3 4-5" fill="none" stroke="#0a72c6" stroke-width="1.500"/><path d="M1 2l10-1v16L1 16z" fill="#0a72c6"/><text x="6" y="13" class="logo">O</text></svg></button>
  <button aria-label="Grammarly"><svg viewBox="0 0 18 18"><circle cx="9" cy="9" r="8" fill="#2cb67a"/><path d="M13 6a5 5 0 10.500 4H10" fill="none" stroke="#fff" stroke-width="1.500"/></svg></button>
  <button aria-label="Globe"><svg viewBox="0 0 18 18"><circle cx="9" cy="9" r="8" fill="#4ba3cd"/><path d="M1 11L11 1M2 14L14 2M5 16L16 5M8 17l9-9" stroke="#123a56" stroke-width="1.500"/></svg></button>
  <button class="run" aria-label="FxPro"><svg viewBox="0 0 16 20"><use href="#fxpro"/></svg></button>
  <button aria-label="MetaTrader"><svg viewBox="0 0 16 18"><use href="#swoosh"/></svg></button>
  <button aria-label="Target"><svg viewBox="0 0 18 18"><circle cx="9" cy="9" r="7" fill="none" stroke="#dd2c34" stroke-width="2"/><path d="M9 4l1.500 2.500h3L12 9l1.500 2.500h-3L9 14l-1.500-2.500h-3L6 9 4.500 6.500h3z" fill="#dd2c34"/><circle cx="9" cy="9" r="1.500" fill="#111"/></svg></button>
  <button aria-label="Rocket"><svg viewBox="0 0 18 18"><path d="M16 1Q8 2 5 8L2 10l3 1-3 5 5-4 1 4 3-4q5-5 5-11z" fill="#eda23c"/><path d="M16 1Q10 5 7 11" stroke="#fbe0a8" fill="none"/></svg></button>
  <button aria-label="Flash"><svg viewBox="0 0 18 18"><path d="M1 0h16v18H1z" fill="#a8080c"/><path d="M10 2L5 10h4l-1 6 5-8H9z" fill="#fff"/></svg></button>
  <button class="run" aria-label="FxPro"><svg viewBox="0 0 16 20"><use href="#fxpro"/></svg></button>
  <button class="run" aria-label="MetaTrader"><svg viewBox="0 0 16 18"><use href="#swoosh"/></svg></button>
  <button class="run current" aria-label="Strategy Tester"><svg viewBox="0 0 18 18"><use href="#student"/></svg></button>
  <div class="tray">
    <svg width="14" height="18"><path d="M1 12l6-6 6 6" fill="none" stroke="#fff" stroke-width="1.500"/></svg>
    <svg width="16" height="18"><path d="M2 15A12 12 0 0114 4M5 15a9 9 0 019-8M8 15a6 6 0 016-5M11 15a3 3 0 013-2" fill="none" stroke="#ccc" stroke-width="1.500"/></svg>
    <svg width="18" height="18"><path d="M1 7h3l4-4v12l-4-4H1z" fill="none" stroke="#fff"/><path d="M10 7q2 2 0 4M12 5q3 4 0 8M14 3q4 6 0 12" fill="none" stroke="#aaa"/></svg>
    <time>22:04</time>
    <svg width="18" height="18"><path d="M1.500 1.500h15v12h-5l-3 3v-3h-7z" fill="none" stroke="#fff" stroke-width="1.500"/></svg>
  </div>
</nav>
</body>
</html>
```

FILE: styles.css
```css
* { box-sizing: border-box; }

body {
  margin: 0;
  min-height: 100vh;
  display: flex;
  flex-direction: column;
  overflow: hidden;
  font: 11px/16px "Open Sans", "Noto Sans", sans-serif;
  color: #000;
  background: #c9c9c9;
}

button {
  border: 0;
  padding: 0;
  background: none;
  font: inherit;
  color: inherit;
}

svg { display: block; flex: none; }
h1, h2, p { margin: 0; font: inherit; }
.defs { position: absolute; }

.desktop {
  flex: 1;
  display: grid;
  grid-template-columns: 7px minmax(0, 1fr) 7px;
  grid-template-rows: minmax(0, 1fr) 7px;
}

/* Slivers of the window that lies underneath */
.behind-left {
  display: flex;
  flex-direction: column;
  background: #d4d4d4;
  overflow: hidden;
}
.bl-red { height: 16px; margin: 3px 0 5px 2px; background: #d8302f; }
.bl-blue { height: 14px; margin: 0 0 8px 4px; border: 1px solid #2b7fb8; background: #e6f2fa; }
.bl-grip { height: 27px; margin-left: 2px; border-left: 2px dotted #999; }
.bl-panel { height: 12px; margin: 6px 0 0 3px; background: #9db4d0; border-left: 1px solid #223; }
.bl-rows {
  height: 204px;
  margin-left: 3px;
  border-left: 1px solid #888;
  background: repeating-linear-gradient(#d0d2bb 0 19px, #a9a9a0 19px 20px);
}
.bl-plain { flex: 1; margin-left: 3px; border-left: 1px solid #999; }
.bl-close { margin-top: 8px; padding-left: 2px; }
.bl-blueband {
  height: 272px;
  margin: 0 0 32px 2px;
  background: linear-gradient(#a3b8d0, #c3d3e4);
  line-height: 10px;
  writing-mode: vertical-rl;
  transform: rotate(180deg);
}
.behind-right { display: flex; flex-direction: column; background: #d4d4d4; }
.br-top { height: 75px; border-bottom: 1px solid #888; background: #dcdcdc; }
.br-black { height: 640px; width: 5px; background: #000; }
.br-low { flex: 1; }
.behind-bottom {
  grid-column: 1 / -1;
  display: flex;
  justify-content: space-between;
  padding: 0 28px 0 3px;
  overflow: hidden;
  line-height: 1px;
  background: #c9c9c9;
}
.bb-def { margin-left: 1130px; margin-right: auto; }

.window {
  display: flex;
  flex-direction: column;
  min-width: 0;
  background: #f0f0f0;
  border: 1px solid #a8987e;
  border-left-color: #cbb890;
}

.titlebar {
  display: flex;
  align-items: center;
  height: 30px;
  padding-left: 8px;
  background: #fff;
}
.titlebar h1 { flex: 1; margin-left: 3px; }
.winbtn { display: grid; place-items: center; width: 46px; height: 30px; }

.menu {
  display: flex;
  gap: 22px;
  height: 21px;
  padding: 0 11px;
  border-bottom: 1px solid #a0a0a0;
}

.toolbar {
  display: flex;
  align-items: center;
  gap: 2px;
  height: 31px;
  border-bottom: 1px solid #a0a0a0;
  box-shadow: inset 0 1px #fff;
}
.tool { display: grid; place-items: center; width: 30px; height: 26px; }
.tool.active { background: #bfdcf5; border: 1px solid #90c3ee; }
.sep { width: 1px; height: 25px; background: #a0a0a0; }
.sep + .tool { margin-left: 3px; }
.speed {
  appearance: none;
  width: 104px;
  height: 22px;
  margin: 0 5px 0 9px;
  background: linear-gradient(#d6d6d6, #e7eaea) center 9px / 100% 4px no-repeat;
}
.speed::-webkit-slider-thumb {
  appearance: none;
  width: 11px;
  height: 19px;
  background: #0078d7;
  clip-path: polygon(0 0, 100% 0, 100% 70%, 50% 100%, 0 70%);
}
.skip { display: flex; align-items: center; gap: 2px; margin-left: 5px; font-size: 12px; color: #a3a3a3; }
.datebox {
  display: flex;
  align-items: center;
  width: 124px;
  height: 21px;
  margin-left: 4px;
  background: #fff;
  border: 1px solid #999;
}
.datebox input {
  flex: 1;
  min-width: 0;
  padding: 0 1px;
  border: 0;
  background: none;
  font: inherit;
  color: #777;
}

.workspace {
  flex: 1;
  display: flex;
  gap: 2px;
  min-height: 0;
  padding-top: 1px;
}

.watch {
  display: flex;
  flex-direction: column;
  width: 181px;
  padding: 0 2px 6px 3px;
  border-right: 1px solid #a0a0a0;
  border-bottom: 1px solid #a0a0a0;
}
.watch header { display: flex; height: 17px; align-items: center; justify-content: space-between; }
.watch h2 { width: 160px; padding-left: 1px; line-height: 17px; background: linear-gradient(90deg, #c4d3e4, #dde7f3); }
.watch header button, .side button { font: bold 14px/14px "Liberation Sans", sans-serif; }
.watch header button { width: 14px; }
.watch-body { flex: 1; background: #fff; border: 1px solid #a0a0a0; border-bottom: 0; }
.watch table { width: 100%; table-layout: fixed; border-collapse: collapse; }
.w-sym { width: 96px; }
.w-spread { width: 28px; }
.watch th, .watch td { padding: 0 5px; font-weight: 400; text-align: right; border-right: 1px solid #dcdcdc; white-space: nowrap; }
.watch td { padding: 0 2px; }
.watch th:first-child, .watch td:first-child { text-align: left; padding-left: 5px; }
.watch th:last-child, .watch td:last-child { border-right: 0; }
.watch th { height: 23px; font-size: 12px; }
.watch td { height: 20px; background: #effff0; border-bottom: 1px solid #c8c8c8; }
.dot { display: inline-block; width: 7px; height: 7px; margin: 0 7px 0 2px; border: 2px solid #999; border-radius: 50%; }

.tabs { display: flex; color: #777; }
.tabs button { height: 19px; padding: 0 11px; }
.tabs .on { margin-top: -1px; height: 20px; color: #000; background: #fff; border: 1px solid #000; border-top-color: #fff; border-bottom-width: 2px; }
.watch-tabs { border-top: 1px solid #000; padding-left: 2px; }
.watch-tabs .on, .box-tabs .on { padding: 0 9px; }
.watch-tabs .on { font-size: 12px; }
.watch-tabs button:last-child { border-right: 1px solid #777; height: 14px; margin-top: 3px; line-height: 12px; }

.chart {
  flex: 1;
  display: grid;
  grid-template-columns: minmax(0, 1fr) 55px;
  grid-template-rows: minmax(0, 1fr) 23px;
  min-width: 0;
  padding-top: 2px;
  background: #fff;
  border-left: 2px solid #777;
  border-top: 2px solid #777;
}
.plot { display: grid; min-height: 0; border: 1px solid #000; }
.plot > * { grid-area: 1 / 1; min-height: 0; min-width: 0; }
.lines { width: 100%; height: 100%; }
.lines polyline, .lines path { vector-effect: non-scaling-stroke; }
.range, .close, .deal { shape-rendering: crispEdges; }
.range { fill: none; stroke: #bdbdbd; stroke-width: 1px; }
.close { fill: none; stroke: #000; stroke-width: 1px; }
.deal { fill: none; stroke-width: 1px; stroke-dasharray: 4 3; }
.blue { stroke: #0b4f94; }
.red { stroke: #c04a30; }
.overlay { display: flex; flex-direction: column; justify-content: space-between; }
.quote, .prices, .times, .stats, .status span { font: 9px/12px "DejaVu Sans Condensed", "DejaVu Sans", sans-serif; font-stretch: condensed; }
.quote { padding-left: 3px; }
.spread { display: flex; gap: 9px; padding-left: 1px; }
.spread strong { align-self: end; font: 24px/32px "Liberation Sans", Arial, sans-serif; color: #ff8c00; }
.stats { display: grid; line-height: 8px; }
.stats .max { color: #d03a10; }
.stats .avg { color: #e0931a; }
.stats .min { color: #ecdc30; }
.status { display: grid; margin-left: 6px; }
.status span { line-height: 9px; color: #777; }
.status b { font: 16px/20px "Liberation Sans", Arial, sans-serif; color: #19e6ee; }
.stats, .status { align-content: start; padding-top: 4px; }
.prices { display: flex; flex-direction: column; overflow: hidden; }
.prices span { flex: none; display: flex; align-items: center; height: 12px; margin-bottom: 24px; }
.prices span:last-child { margin-bottom: 0; }
.prices span::before { content: ""; width: 4px; height: 1px; margin-right: 2px; background: #000; }
.times { display: grid; grid-template-columns: repeat(26, minmax(0, 1fr)); white-space: nowrap; }
.times span::before { content: ""; display: block; width: 1px; height: 3px; background: #000; }

.toolbox { display: flex; margin-top: 3px; border-bottom: 1px solid #a0a0a0; }
.side { display: flex; flex-direction: column; width: 15px; padding: 0 1px 2px; }
.side button { height: 13px; text-align: center; }
.side span { flex: 1; background: linear-gradient(#9cb6d6, #c4d8ee); writing-mode: vertical-rl; transform: rotate(180deg); padding-top: 3px; font-size: 12px; line-height: 13px; }
.toolbox-main { flex: 1; min-width: 0; padding: 0 4px 4px 0; }
.history { display: flex; height: 263px; overflow: hidden; border: 1px solid #a0a0a0; border-bottom-color: #000; border-right: 0; }
.history table { flex: 1; width: 100%; min-width: 0; table-layout: fixed; border-collapse: separate; border-spacing: 0; background: #fff; }
.c1 { width: 160px; } .c2 { width: 141px; } .c3 { width: 198px; } .c4 { width: 169px; } .c5 { width: 282px; }
.history th, .history td { padding: 0 3px; border-right: 1px solid #d0d0d0; font-weight: 400; text-align: right; white-space: nowrap; }
.history th { height: 23px; padding: 0 5px; border-color: #e5e5e5; font-size: 12px; }
.history th:first-child { text-align: left; }
.history td { height: 20px; border-bottom: 1px solid #c3c3c3; line-height: 19px; }
.history td:first-child { display: flex; padding: 0 18px 0 2px; align-items: center; justify-content: flex-end; }
.history td:last-child { border-right: 0; }
.history td[colspan] { font-size: 12px; }
.order td { background: #ebebeb; }
.sel td { background: #3399ff; color: #fff; border-color: #9ccbf5; }
.deal-ico, .order-ico { width: 12px; height: 16px; }
.order-ico { margin-right: auto; }
.deal-ico { margin-left: 18px; margin-right: auto; }
.scroll { display: flex; flex-direction: column; width: 17px; background: #f0f0f0; }
.scroll i { height: 44px; width: 15px; margin: 98px 1px auto; background: #cdcdcd; }
.box-tabs button:last-child, .box-tabs button:nth-child(3) { border-right: 1px solid #777; height: 14px; margin-top: 3px; line-height: 12px; }

.statusbar { display: flex; align-items: center; height: 24px; padding-right: 2px; }
.help { flex: 1; padding-left: 2px; }
.statusbar span:not(.help) { padding-left: 5px; border-left: 1px solid #a0a0a0; line-height: 18px; }
.s-date { width: 98px; }
.s-ohlc { width: 70px; }
.s-vol { width: 58px; }
.statusbar svg { align-self: end; }

.taskbar { display: flex; height: 30px; background: linear-gradient(90deg, #0a0808 0 75%, #14150f 77%, #050404 85%); }
.taskbar button { display: grid; place-items: center; flex: none; width: 37px; }
.taskbar button svg { width: 18px; height: 20px; }
.taskbar .run { box-shadow: inset 0 -2px #f6c27a; background-clip: content-box; padding: 0 4px; }
.taskbar .current { padding: 0; background: #3d3a39; }
.tray { display: flex; align-items: center; gap: 7px; margin-left: auto; padding-right: 25px; color: #fff; }
.tray time { margin: 0 9px 0 2px; }
.logo { font: bold 10px "Liberation Sans", sans-serif; text-anchor: middle; }
.logo:not([fill]) { fill: #fff; }
.logo-serif { font: 10px "Liberation Serif", serif; text-anchor: middle; fill: #fff; }
.logo-serif.small { font-size: 8px; }
```
